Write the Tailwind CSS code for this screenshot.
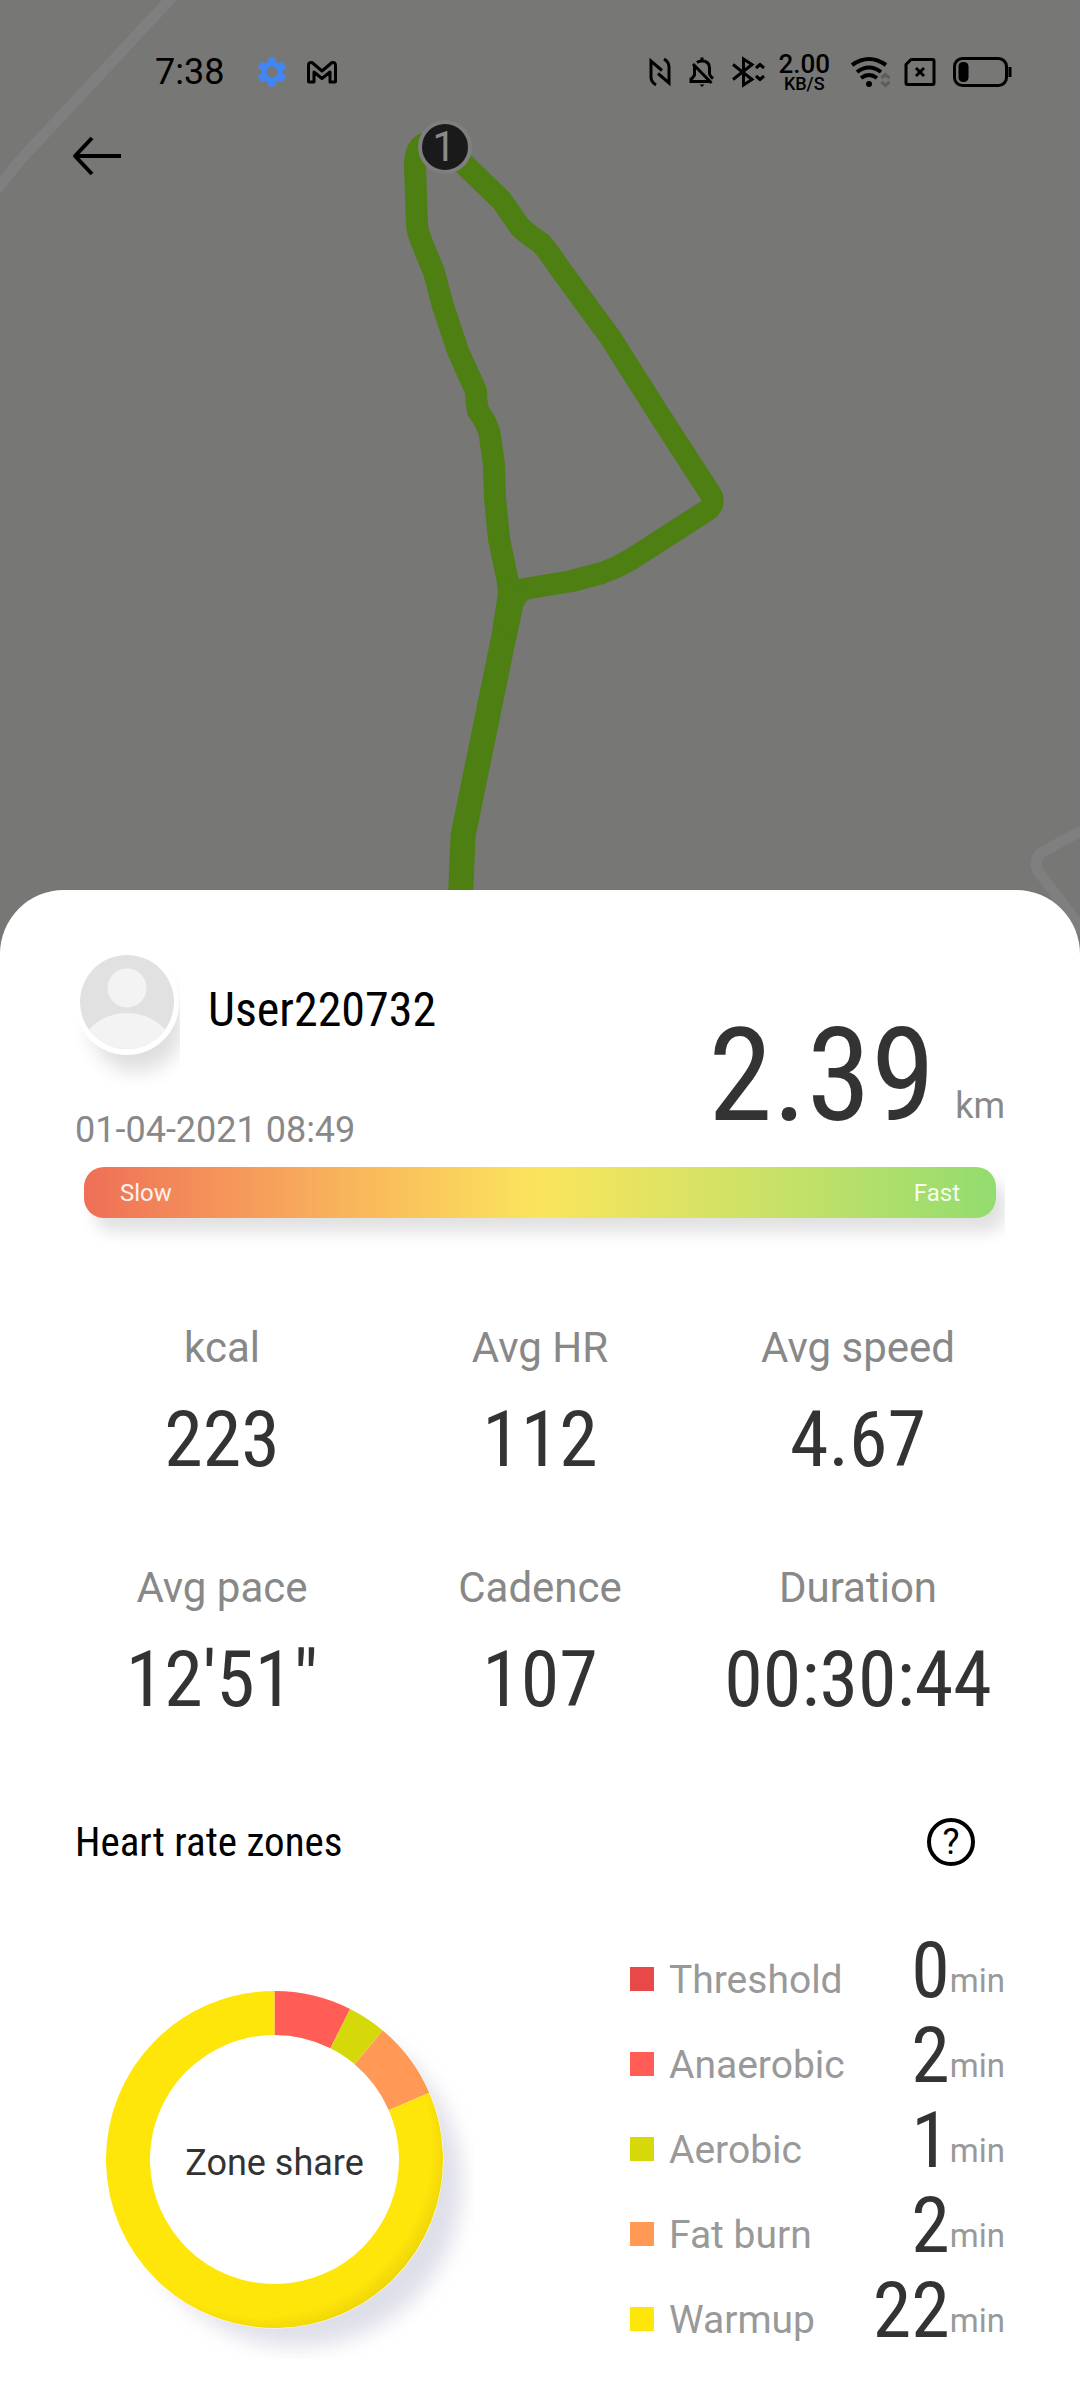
<!DOCTYPE html>
<html lang="en">
  <head>
    <meta charset="UTF-8" />
    <meta name="viewport" content="width=device-width, initial-scale=1.0" />
    <title>Walk 01-04-2021</title>
    <script src="https://cdn.jsdelivr.net/npm/@tailwindcss/browser@4"></script>
  </head>
  <body class="flex min-h-screen flex-col bg-white font-['Roboto',sans-serif] text-black">
    <!-- Map -->
    <header class="relative h-[954px] overflow-hidden bg-[#777775]">
      <svg class="absolute inset-0 h-full w-full" viewBox="0 0 1080 954" preserveAspectRatio="xMidYMin slice" fill="none" stroke-linejoin="round" stroke-linecap="round">
        <!-- roads -->
        <g stroke="#7f7f7f" stroke-width="11">
          <path d="M175 -6L24 156Q14 167 -10 198" />
          <path d="M1090 826L1042 852Q1033 860 1038 871L1090 940" />
        </g>
        <!-- route -->
        <g stroke="#4d7f13">
          <path stroke-width="22" d="M445 147Q415 133 415 166L417 225Q418 233 422 243L434 272L443 306L458 351L476 391Q476 402 478 411Q488 424 490 436L494 465L495 498L499 539L508 582L513 597L518 590L572 581L602 573Q616 568 630 560L706 511Q717 504 710 493L660 416L610 337L558 266Q548 251 541 243Q531 237 520 227L502 201L464 164L445 147" />
          <path stroke-width="25" stroke-linecap="butt" d="M510 598L504 636L463 836L460 910" />
          <path fill="#4d7f13" stroke="none" d="M497 582L513 583L534 597Q523 600 522 612L516 640L494 620L498 595Z" />
        </g>
        <!-- kilometre marker -->
        <circle cx="445" cy="147" r="25" fill="#1a1a1a" stroke="#7f7f7f" stroke-width="4" />
        <text x="444" y="161" text-anchor="middle" class="fill-[#8a8a8a] text-[42px]">1</text>
      </svg>

      <!-- Status bar -->
      <div class="relative flex h-36 items-center justify-between pr-[68px] pl-[155px]">
        <div class="flex items-center">
          <span class="text-4xl">7:38</span>
          <svg class="ml-7.5 size-9" viewBox="0 0 24 24" fill="#4285f4"><path d="M19.14 12.94c.04-.3.06-.61.06-.94 0-.32-.02-.64-.07-.94l2.03-1.58c.18-.14.23-.41.12-.61l-1.92-3.32c-.12-.22-.37-.29-.59-.22l-2.39.96c-.5-.38-1.03-.7-1.62-.94l-.36-2.54c-.04-.24-.24-.41-.48-.41h-3.84c-.24 0-.43.17-.47.41l-.36 2.54c-.59.24-1.13.57-1.62.94l-2.39-.96c-.22-.08-.47 0-.59.22L2.74 8.87c-.12.21-.08.47.12.61l2.03 1.58c-.05.3-.09.63-.09.94s.02.64.07.94l-2.03 1.58c-.18.14-.23.41-.12.61l1.92 3.32c.12.22.37.29.59.22l2.39-.96c.5.38 1.03.7 1.62.94l.36 2.54c.05.24.24.41.48.41h3.84c.24 0 .44-.17.47-.41l.36-2.54c.59-.24 1.13-.56 1.62-.94l2.39.96c.22.08.47 0 .59-.22l1.92-3.32c.12-.22.07-.47-.12-.61l-2.01-1.58zM12 15.6c-1.98 0-3.6-1.62-3.6-3.6s1.62-3.6 3.6-3.6 3.6 1.62 3.6 3.6-1.62 3.6-3.6 3.6z" /></svg>
          <svg class="ml-4 h-7 w-8" viewBox="0 0 32 28" fill="none" stroke="#000" stroke-width="3" stroke-linejoin="round"><path d="M2.500 23.500V7.500Q2.500 4 6 4.500L16 13L26 4.500Q29.500 4 29.500 7.500V23.500Q29.500 24 29 24H24V14L16 20.500L8 14V24H3Q2.500 24 2.500 23.500Z" /></svg>
        </div>
        <div class="flex items-center">
          <!-- nfc -->
          <svg class="h-8 w-6" viewBox="0 0 24 32" fill="none" stroke="#000" stroke-width="3"><path d="M8 29Q3 26 3 21V5L14 14.500M16 3Q21 6 21 11V27L10 17.500" /></svg>
          <!-- muted bell -->
          <svg class="ml-4 h-8 w-7" viewBox="0 0 28 32" fill="none" stroke="#000" stroke-width="3"><path d="M9 6.500Q11 5 14 5Q21.500 5 21.500 12V18Q22 20 25 22.500M14 1.500V5M6.500 10V19Q5 22 3 23V25.500H22M5 8L23.500 27" /><path d="M11.500 28.500H16.500L14 31Z" fill="#000" stroke="none" /></svg>
          <!-- bluetooth -->
          <svg class="ml-3.5 h-8 w-9" viewBox="0 0 36 32" fill="none" stroke="#000" stroke-width="3"><path d="M3 8.500L22 23.500L13.500 29V3L22 8.500L3 23.500M26 12L30 8.500L34 12M26 20L30 23.500L34 20" /></svg>
          <div class="ml-3 text-center font-medium">
            <div class="text-[26px] leading-6">2.00</div>
            <div class="text-lg leading-4">KB/S</div>
          </div>
          <!-- wifi -->
          <svg class="ml-5 h-8 w-10" viewBox="0 0 40 32" fill="none" stroke="#000" stroke-width="4"><path d="M2 9Q19 -3 36 9M7 16Q19 7 31 16M11 22Q19 16 27 22" /><circle cx="19" cy="28" r="3" fill="#000" stroke="none" /><path stroke="#5c5c5b" stroke-width="3" d="M31.500 22L35.500 18.500L39.500 22M31.500 26L35.500 29.500L39.500 26" /></svg>
          <!-- no sim -->
          <svg class="ml-3.5 h-8 w-8" viewBox="0 0 32 32" fill="none" stroke="#000" stroke-width="3" stroke-linejoin="round"><path d="M7 3.500H28.500Q30 3.500 30 5V27Q30 28.500 28.500 28.500H3.500Q2 28.500 2 27V8.500ZM12 12L20 20M20 12L12 20" /></svg>
          <!-- battery -->
          <svg class="ml-4 h-8 w-[60px]" viewBox="0 0 60 32" fill="none" stroke="#000" stroke-width="3"><rect x="2.500" y="2.500" width="52" height="27" rx="8" /><rect x="6.500" y="6" width="10" height="20" rx="4.500" fill="#000" stroke="none" /><path d="M58 11V21" /></svg>
        </div>
      </div>

      <button type="button" aria-label="Back" class="relative -mt-3 ml-[72px] block h-12 w-[50px]">
        <svg class="h-12 w-[50px]" viewBox="0 0 50 48" fill="none" stroke="#000" stroke-width="4"><path d="M49 24H4M20 6L3 24L20 42" stroke-linejoin="round" /></svg>
      </button>
    </header>

    <!-- Details sheet -->
    <main class="relative -mt-16 grow rounded-t-[64px] bg-white px-[75px] pt-16 pb-9">
      <section class="flex items-end justify-between">
        <div>
          <div class="flex items-center gap-7">
            <svg class="-mb-9 h-34 w-[105px]" viewBox="0 0 105 136">
              <defs>
                <filter id="soft" x="-50%" y="-50%" width="200%" height="200%"><feGaussianBlur stdDeviation="10" /></filter>
                <clipPath id="face"><circle cx="52" cy="48" r="47" /></clipPath>
              </defs>
              <circle cx="62" cy="72" r="46" fill="#000" opacity=".13" filter="url(#soft)" />
              <circle cx="52" cy="49" r="52" fill="#fff" />
              <circle cx="52" cy="48" r="47" fill="#e1e1e1" />
              <g clip-path="url(#face)" fill="#f3f3f3">
                <circle cx="52" cy="34" r="19.500" />
                <ellipse cx="52" cy="102" rx="48" ry="43" />
              </g>
            </svg>
            <h1 class="pt-3 font-['Roboto_Condensed','Roboto',sans-serif] text-5xl">User220732</h1>
          </div>
          <p class="mt-14 text-4xl leading-10 text-[#888]">01-04-2021 08:49</p>
        </div>
        <p class="mb-2 flex items-end gap-5">
          <span class="font-['Roboto_Condensed','Roboto',sans-serif] text-[130px] leading-[132px] text-[#333]">2.39</span>
          <span class="mb-4 text-4xl leading-10 text-[#888]">km</span>
        </p>
      </section>

      <!-- Pace scale -->
      <div class="mt-4 overflow-hidden px-[9px] pt-px pb-10">
        <div class="flex h-[51px] items-center justify-between rounded-[20px] bg-linear-to-r from-[#ee6f57] via-[#fae55c] to-[#92dc6f] px-9 text-2xl text-white/90 shadow-[10px_14px_16px_rgba(0,0,0,0.12)]">
          <span>Slow</span>
          <span>Fast</span>
        </div>
      </div>

      <!-- Stats -->
      <dl id="stats" class="-mx-3 mt-16.5 grid grid-cols-3 gap-y-21 text-center"></dl>

      <!-- Heart rate zones -->
      <section class="mt-24.5">
        <div class="flex items-center justify-between pr-[30px]">
          <h2 class="font-['Roboto_Condensed','Roboto',sans-serif] text-[41px] leading-12">Heart rate zones</h2>
          <button type="button" aria-label="About heart rate zones" class="flex size-12 items-center justify-center rounded-full border-4 border-black text-4xl">?</button>
        </div>

        <div class="mt-[72px] flex items-start justify-between">
          <svg class="mt-[53px] ml-[31px] size-[368px]" viewBox="0 0 368 368" fill="none">
            <defs>
              <filter id="blur" x="-20%" y="-20%" width="140%" height="140%"><feGaussianBlur stdDeviation="10" /></filter>
              <radialGradient id="shade" gradientUnits="userSpaceOnUse" cx="156" cy="156" r="187">
                <stop offset=".9" stop-color="#b09800" stop-opacity="0" />
                <stop offset="1" stop-color="#b09800" stop-opacity=".22" />
              </radialGradient>
            </defs>
            <circle cx="192" cy="192" r="164" fill="#dfdfe9" filter="url(#blur)" />
            <circle cx="168.500" cy="168.500" r="169" fill="#fff" />
            <g id="ring" stroke-width="44"></g>
            <circle cx="168.500" cy="168.500" r="146.500" stroke="url(#shade)" stroke-width="44" />
            <text x="168.500" y="184" text-anchor="middle" class="fill-[#333] text-4xl">Zone share</text>
          </svg>
          <ul id="zones" class="w-[375px]"></ul>
        </div>
      </section>
    </main>

    <script>
      const stats = [
        ["kcal", "223"],
        ["Avg HR", "112"],
        ["Avg speed", "4.67"],
        ["Avg pace", "12'51\""],
        ["Cadence", "107"],
        ["Duration", "00:30:44"],
      ];
      const zones = [
        { name: "Threshold", min: 0, color: "#e84848" },
        { name: "Anaerobic", min: 2, color: "#ff5d55" },
        { name: "Aerobic", min: 1, color: "#d5d90a" },
        { name: "Fat burn", min: 2, color: "#ff9955" },
        { name: "Warmup", min: 22, color: "#ffe60a" },
      ];

      stats.forEach(([label, value]) => {
        document.getElementById("stats").innerHTML += `
          <div>
            <dt class="text-[42px] leading-12 text-[#888]">${label}</dt>
            <dd class="mt-7 font-['Roboto_Condensed','Roboto',sans-serif] text-[78px] leading-20 text-[#333]">${value}</dd>
          </div>
        `;
      });

      // ring segments run clockwise from the top
      const total = zones.reduce((sum, z) => sum + z.min, 0);
      let done = 0;
      zones.forEach((z) => {
        document.getElementById("zones").innerHTML += `
          <li class="flex h-[85px] items-center">
            <span class="mb-1 size-6" style="background-color: ${z.color}"></span>
            <span class="ml-[15px] grow text-[39px] text-[#999]">${z.name}</span>
            <span class="mb-5 font-['Roboto_Condensed','Roboto',sans-serif] text-[78px] leading-[78px] text-[#333]">${z.min}</span>
            <span class="text-[33px] text-[#999]">min</span>
          </li>
        `;
        if (z.min > 0) {
          document.getElementById("ring").innerHTML += `
            <circle cx="168.500" cy="168.500" r="146.500" pathLength="${total}" stroke="${z.color}"
              stroke-dasharray="${z.min} ${total - z.min}" transform="rotate(${(done / total) * 360 - 90} 168.500 168.500)" />
          `;
        }
        done += z.min;
      });
    </script>
  </body>
</html>
